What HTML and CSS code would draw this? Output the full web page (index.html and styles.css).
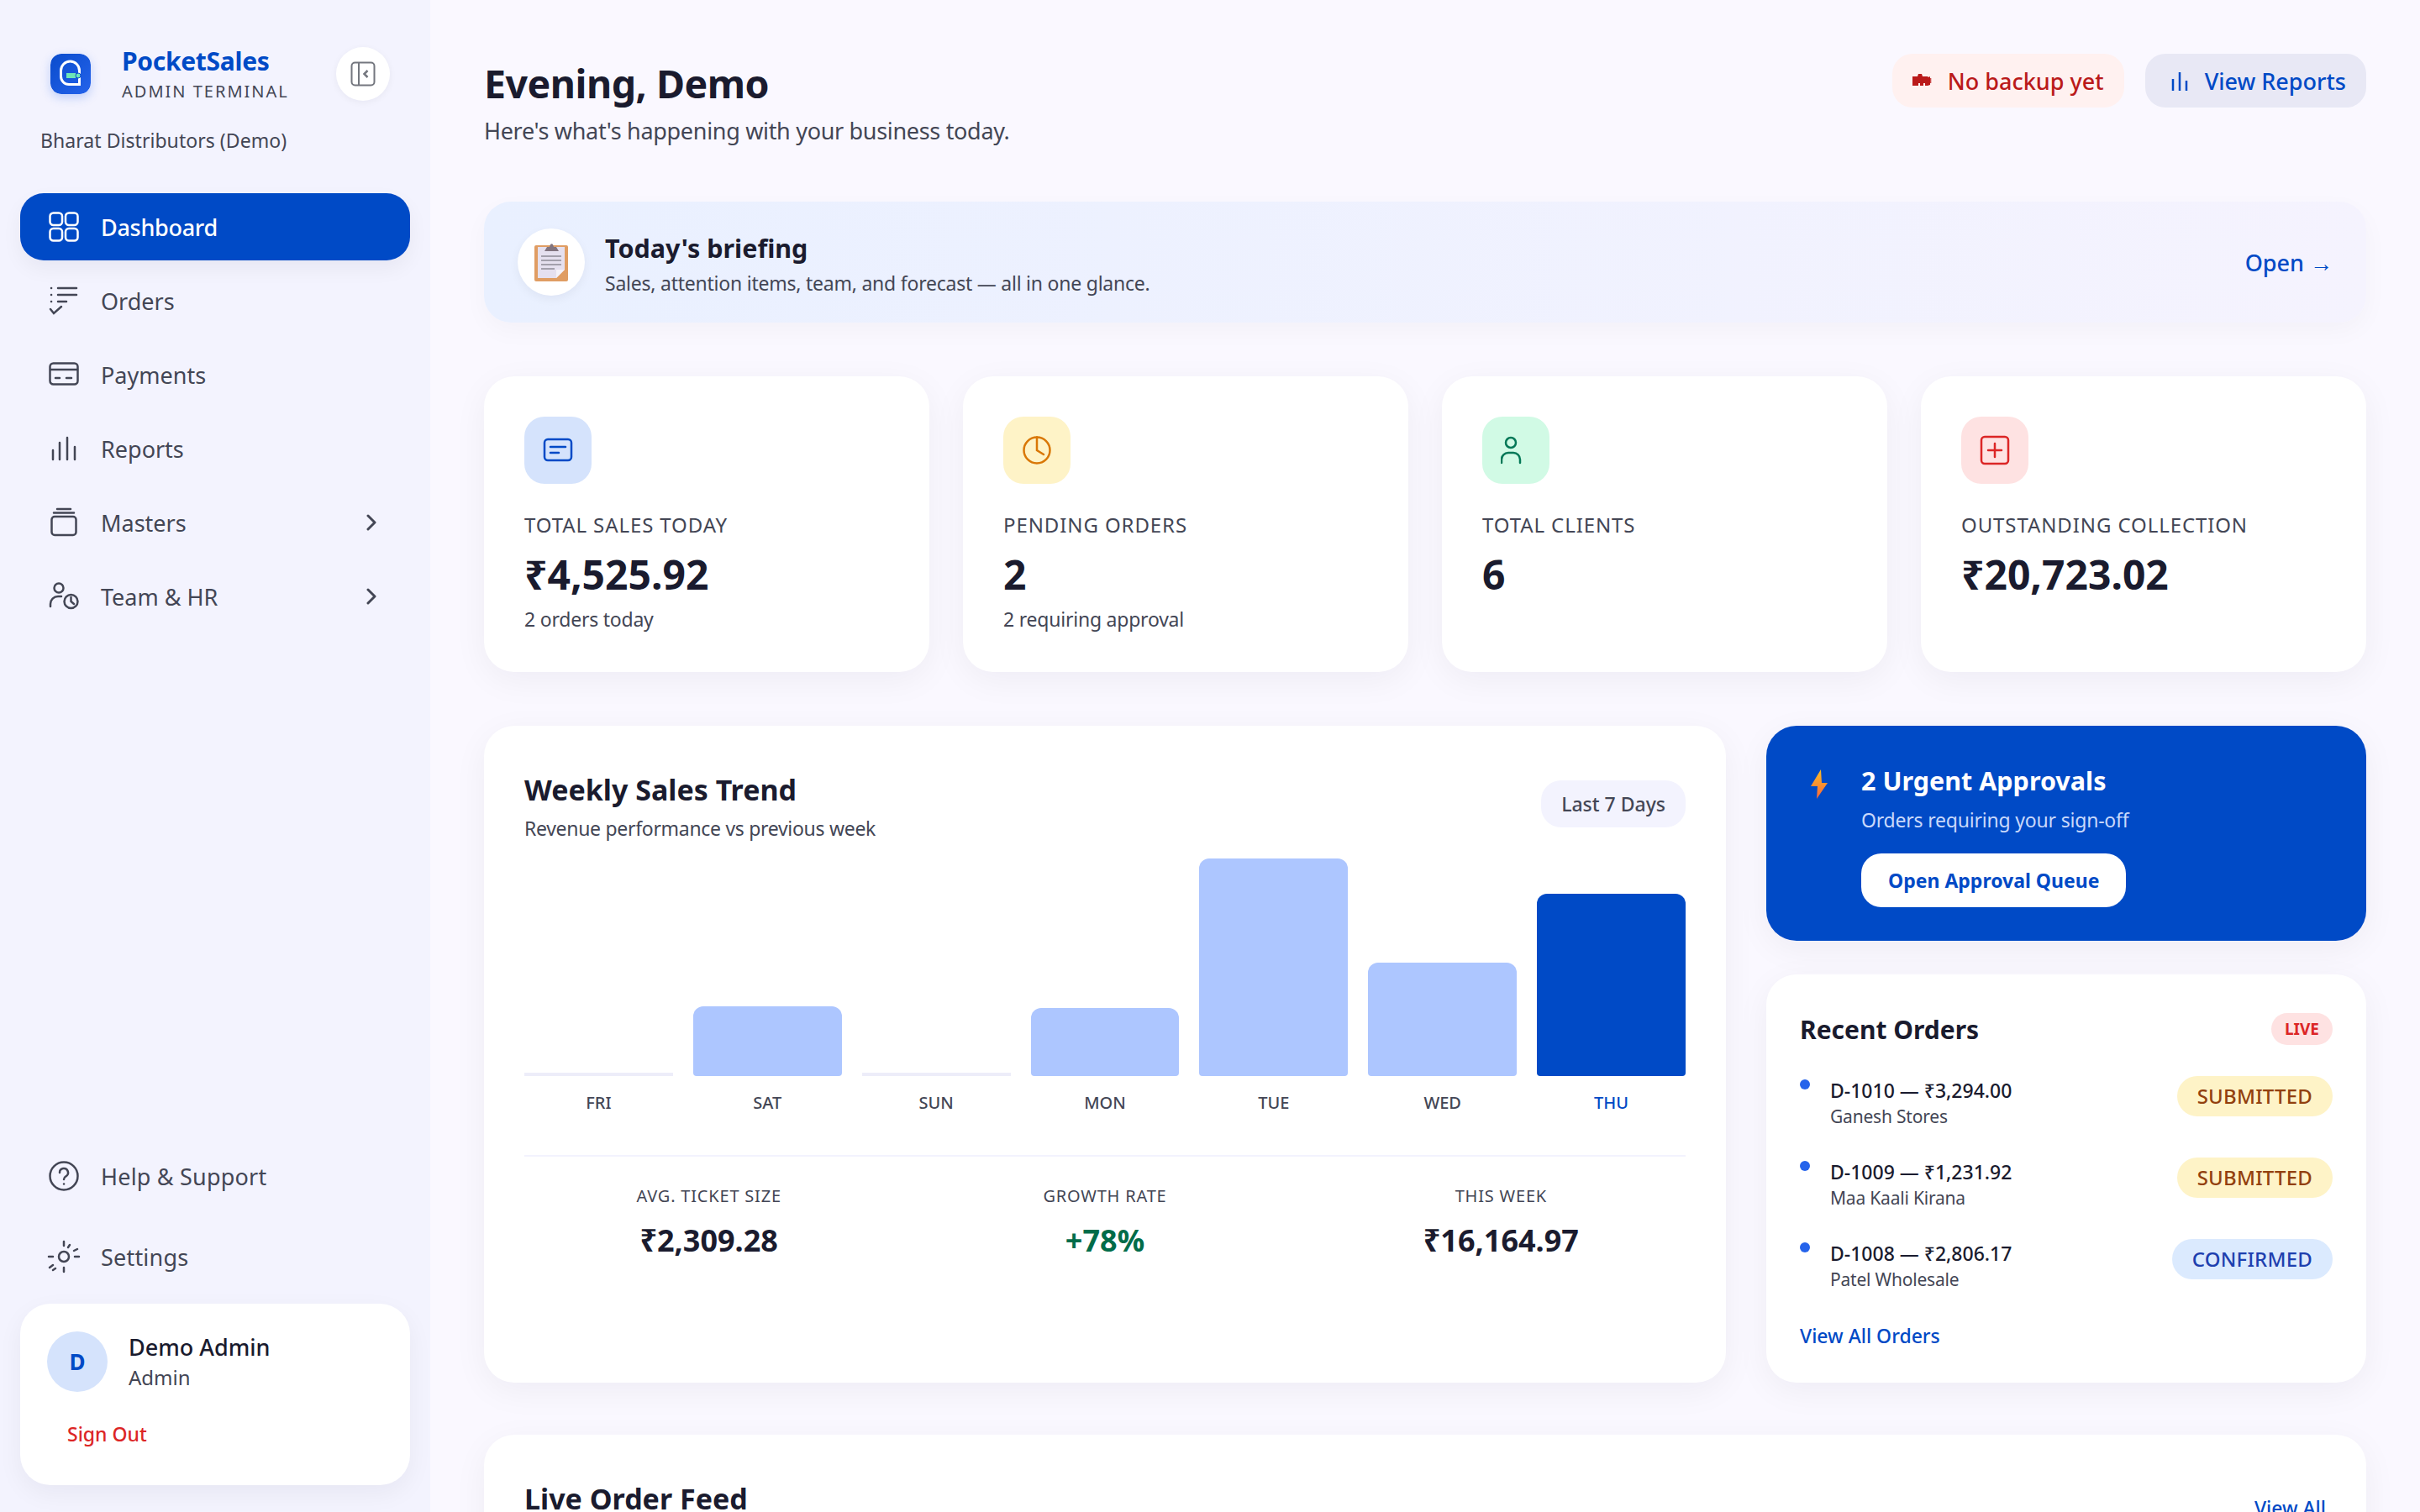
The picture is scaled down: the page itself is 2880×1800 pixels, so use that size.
FILE: index.html

```html
<!DOCTYPE html>
<html lang="en">
<head>
  <meta charset="UTF-8" />
  <title>PocketSales</title>
  <link rel="stylesheet" href="styles.css">
</head>
<body>
  <aside class="sidebar">
    <div class="brand">
      <svg class="brand-logo" viewBox="0 0 48 48">
        <defs>
          <linearGradient id="logoFill" x1="0" y1="0" x2="1" y2="1">
            <stop offset="0" stop-color="#0a4ccc" />
            <stop offset="1" stop-color="#2563eb" />
          </linearGradient>
        </defs>
        <rect width="48" height="48" rx="13" fill="url(#logoFill)" />
        <path d="M34 36.500H22a9.500 9.500 0 0 1-9.500-9.500V20a11 11 0 0 1 22 0v16.500z" fill="none" stroke="#fff" stroke-width="3" />
        <rect x="19" y="23" width="11" height="6" fill="#6ee7b7" />
        <circle cx="33" cy="26" r="3" fill="#6ee7b7" stroke="#0a4ccc" stroke-width="1" />
      </svg>
      <div class="brand-text">
        <div class="brand-name">PocketSales</div>
        <div class="brand-role">ADMIN TERMINAL</div>
      </div>
      <button class="collapse-btn">
        <svg class="icon-sm" viewBox="0 0 30 30" fill="none" stroke="#74777f" stroke-width="2">
          <rect x="1.500" y="1.500" width="27" height="27" rx="4" />
          <path d="M10 1.500v27" />
          <path d="M20.500 11l-4 4 4 4" stroke-width="2.500" />
        </svg>
      </button>
    </div>
    <div class="org-name">Bharat Distributors (Demo)</div>

    <nav class="nav">
      <a class="nav-item active">
        <svg class="nav-icon" viewBox="0 0 36 36" fill="none" stroke="currentColor" stroke-width="2.500">
          <rect x="1.500" y="1.500" width="14.500" height="14.500" rx="4" />
          <rect x="20" y="1.500" width="14.500" height="14.500" rx="4" />
          <rect x="1.500" y="20" width="14.500" height="14.500" rx="4" />
          <rect x="20" y="20" width="14.500" height="14.500" rx="4" />
        </svg>
        <span>Dashboard</span>
      </a>
      <a class="nav-item">
        <svg class="nav-icon" viewBox="0 0 36 36" fill="none" stroke="currentColor" stroke-width="2.500" stroke-linecap="round">
          <path d="M3 3h.1M3 11h.1M3 19h.1M11 3h22M11 11h22M11 19h10M2 28l4 5 9-8" />
        </svg>
        <span>Orders</span>
      </a>
      <a class="nav-item">
        <svg class="nav-icon" viewBox="0 0 36 36" fill="none" stroke="currentColor" stroke-width="2.500" stroke-linecap="round">
          <rect x="1.500" y="4.500" width="33" height="25" rx="4" />
          <path d="M2 12h32M8 22h5M21 22h6" />
        </svg>
        <span>Payments</span>
      </a>
      <a class="nav-item">
        <svg class="nav-icon" viewBox="0 0 36 36" fill="none" stroke="currentColor" stroke-width="2.500" stroke-linecap="round">
          <path d="M5 20v11M13 11v20M22 5v26M31 16v15" />
        </svg>
        <span>Reports</span>
      </a>
      <a class="nav-item">
        <svg class="nav-icon" viewBox="0 0 36 36" fill="none" stroke="currentColor" stroke-width="2.500" stroke-linecap="round">
          <rect x="3.500" y="11" width="29" height="22" rx="3.500" />
          <path d="M6 6.500h24M10 2h16" />
        </svg>
        <span>Masters</span>
        <svg class="chevron" viewBox="0 0 12 20" fill="none" stroke="currentColor" stroke-width="3" stroke-linecap="round" stroke-linejoin="round"><path d="M2 2l8 8-8 8" /></svg>
      </a>
      <a class="nav-item">
        <svg class="nav-icon" viewBox="0 0 36 36" fill="none" stroke="currentColor" stroke-width="2.500" stroke-linecap="round">
          <circle cx="12" cy="8" r="5.500" />
          <path d="M2 30v-3a9 9 0 0 1 9-9h4" />
          <circle cx="26.500" cy="24" r="8" />
          <path d="M26.500 19v5l3.500 3" />
        </svg>
        <span>Team &amp; HR</span>
        <svg class="chevron" viewBox="0 0 12 20" fill="none" stroke="currentColor" stroke-width="3" stroke-linecap="round" stroke-linejoin="round"><path d="M2 2l8 8-8 8" /></svg>
      </a>
    </nav>

    <div class="sidebar-foot">
      <a class="nav-item foot-item">
        <svg class="nav-icon" viewBox="0 0 36 36" fill="none" stroke="currentColor" stroke-width="2.500" stroke-linecap="round">
          <circle cx="18" cy="18" r="16.500" />
          <path d="M13 14a5 5 0 1 1 7.500 4.300c-1.600 1-2.500 2-2.500 3.700M18 27.500h.1" />
        </svg>
        <span>Help &amp; Support</span>
      </a>
      <a class="nav-item foot-item">
        <svg class="nav-icon gear" viewBox="0 0 40 40" fill="none" stroke="currentColor" stroke-width="2.500" stroke-linecap="round">
          <circle cx="20" cy="20" r="6" />
          <path d="M20 2v5M20 33v5M2 20h5M33 20h5M27 6l-2 3M36 11l-4 2M3 33l4-3M7 36l3-2" />
        </svg>
        <span>Settings</span>
      </a>
      <div class="user-card">
        <div class="user-row">
          <div class="avatar">D</div>
          <div class="user-text">
            <div class="user-name">Demo Admin</div>
            <div class="user-role">Admin</div>
          </div>
        </div>
        <a class="sign-out">Sign Out</a>
      </div>
    </div>
  </aside>

  <main class="main">
    <header class="page-head">
      <div>
        <h1>Evening, Demo</h1>
        <p>Here's what's happening with your business today.</p>
      </div>
      <div class="head-actions">
        <div class="chip chip-red">
          <svg class="chip-icon" viewBox="0 0 24 18" fill="#ba1a1a">
            <path d="M0 4h6l1-3h4l1 3h6l1 1 2-1v2l2 1-2 1 2 1-2 1 2 1-2 1v2l-3 1h-3v-3h-2v3H9v-3H7v3H0z" />
          </svg>
          <span>No backup yet</span>
        </div>
        <div class="chip chip-blue">
          <svg class="chip-icon" viewBox="0 0 24 24" fill="none" stroke="#004ac6" stroke-width="2.500">
            <path d="M4 10v14M12 2v22M20 12v12" />
          </svg>
          <span>View Reports</span>
        </div>
      </div>
    </header>

    <section class="briefing">
      <div class="brief-icon">
        <svg viewBox="0 0 40 46" width="40" height="46">
          <rect x="0" y="3" width="40" height="43" rx="2" fill="#e09d63" />
          <rect x="4" y="5" width="32" height="37" fill="#e5e0ef" />
          <path d="M26 42l10-10v10z" fill="#e09d63" />
          <path d="M26 42v-10h10z" fill="#f5f2f8" />
          <path d="M12 10l3-5h3l1-3a2 2 0 0 1 3 0l1 3h3l3 5z" fill="#81747f" />
          <path d="M8 16h24M8 21h24M8 26h24M8 31h16" stroke="#8d8a97" stroke-width="1.500" />
        </svg>
      </div>
      <div class="brief-text">
        <div class="brief-title">Today's briefing</div>
        <div class="brief-sub">Sales, attention items, team, and forecast — all in one glance.</div>
      </div>
      <a class="brief-link">Open →</a>
    </section>

    <section class="stats">
      <div class="stat-card">
        <div class="stat-icon tint-blue">
          <svg viewBox="0 0 36 36" fill="none" stroke="#004ac6" stroke-width="2.500" stroke-linecap="round">
            <rect x="2" y="5" width="32" height="25" rx="4" />
            <path d="M9 14h18M9 21h10" />
          </svg>
        </div>
        <div class="stat-label">Total Sales Today</div>
        <div class="stat-value">₹4,525.92</div>
        <div class="stat-sub">2 orders today</div>
      </div>
      <div class="stat-card">
        <div class="stat-icon tint-yellow">
          <svg viewBox="0 0 36 36" fill="none" stroke="#d97706" stroke-width="2.500" stroke-linecap="round">
            <circle cx="18" cy="18" r="15.500" />
            <path d="M18 2.500V18l8 5" />
          </svg>
        </div>
        <div class="stat-label">Pending Orders</div>
        <div class="stat-value">2</div>
        <div class="stat-sub">2 requiring approval</div>
      </div>
      <div class="stat-card">
        <div class="stat-icon tint-green">
          <svg viewBox="0 0 36 36" fill="none" stroke="#047857" stroke-width="2.500" stroke-linecap="round">
            <circle cx="12" cy="9" r="6" />
            <path d="M1 33v-4a8 8 0 0 1 8-8h6a8 8 0 0 1 8 8v4" />
          </svg>
        </div>
        <div class="stat-label">Total Clients</div>
        <div class="stat-value">6</div>
      </div>
      <div class="stat-card">
        <div class="stat-icon tint-red">
          <svg viewBox="0 0 36 36" fill="none" stroke="#dc2626" stroke-width="2.500" stroke-linecap="round">
            <rect x="2" y="2" width="32" height="32" rx="4" />
            <path d="M18 10v16M10 18h16" />
          </svg>
        </div>
        <div class="stat-label">Outstanding Collection</div>
        <div class="stat-value">₹20,723.02</div>
      </div>
    </section>

    <section class="mid">
      <div class="chart-card">
        <div class="chart-head">
          <div>
            <h2>Weekly Sales Trend</h2>
            <p>Revenue performance vs previous week</p>
          </div>
          <div class="range-pill">Last 7 Days</div>
        </div>
        <div class="bars">
          <div class="bar-col"><div class="bar bar-empty"></div><span>FRI</span></div>
          <div class="bar-col"><div class="bar" style="height: 83px"></div><span>SAT</span></div>
          <div class="bar-col"><div class="bar bar-empty"></div><span>SUN</span></div>
          <div class="bar-col"><div class="bar" style="height: 81px"></div><span>MON</span></div>
          <div class="bar-col"><div class="bar" style="height: 259px"></div><span>TUE</span></div>
          <div class="bar-col"><div class="bar" style="height: 135px"></div><span>WED</span></div>
          <div class="bar-col today"><div class="bar" style="height: 217px"></div><span>THU</span></div>
        </div>
        <div class="chart-stats">
          <div class="chart-stat">
            <div class="chart-stat-label">AVG. TICKET SIZE</div>
            <div class="chart-stat-value">₹2,309.28</div>
          </div>
          <div class="chart-stat">
            <div class="chart-stat-label">GROWTH RATE</div>
            <div class="chart-stat-value up">+78%</div>
          </div>
          <div class="chart-stat">
            <div class="chart-stat-label">THIS WEEK</div>
            <div class="chart-stat-value">₹16,164.97</div>
          </div>
        </div>
      </div>

      <div class="side-col">
        <div class="urgent-card">
          <svg class="bolt" viewBox="0 0 26 36">
            <defs>
              <linearGradient id="boltFill" x1="0" y1="0" x2="0" y2="1">
                <stop offset="0" stop-color="#fbbf24" />
                <stop offset="1" stop-color="#f9653c" />
              </linearGradient>
            </defs>
            <path d="M17 0L5 20h8l-1 15 13-19h-7z" fill="url(#boltFill)" />
          </svg>
          <div>
            <div class="urgent-title">2 Urgent Approvals</div>
            <div class="urgent-sub">Orders requiring your sign-off</div>
            <a class="urgent-btn">Open Approval Queue</a>
          </div>
        </div>

        <div class="orders-card">
          <div class="orders-head">
            <h3>Recent Orders</h3>
            <span class="live-pill">LIVE</span>
          </div>
          <div class="order-row">
            <i class="order-dot"></i>
            <div class="order-info">
              <div class="order-id">D-1010 — ₹3,294.00</div>
              <div class="order-client">Ganesh Stores</div>
            </div>
            <span class="status status-submitted">SUBMITTED</span>
          </div>
          <div class="order-row">
            <i class="order-dot"></i>
            <div class="order-info">
              <div class="order-id">D-1009 — ₹1,231.92</div>
              <div class="order-client">Maa Kaali Kirana</div>
            </div>
            <span class="status status-submitted">SUBMITTED</span>
          </div>
          <div class="order-row">
            <i class="order-dot"></i>
            <div class="order-info">
              <div class="order-id">D-1008 — ₹2,806.17</div>
              <div class="order-client">Patel Wholesale</div>
            </div>
            <span class="status status-confirmed">CONFIRMED</span>
          </div>
          <a class="view-all-orders">View All Orders</a>
        </div>
      </div>
    </section>

    <section class="feed-card">
      <h2>Live Order Feed</h2>
      <a class="feed-link">View All</a>
    </section>
  </main>
</body>
</html>
```

FILE: styles.css

```css
* {
  box-sizing: border-box;
}
html, body {
  margin: 0;
  height: 1800px;
  overflow: hidden;
}
body {
  display: flex;
  background-color: #faf8ff;
  color: #1a1b2e;
  font-family: "Noto Sans", "Open Sans", sans-serif;
}
h1, h2, h3, p {
  margin: 0;
}

/* sidebar */
.sidebar {
  width: 512px;
  flex: none;
  height: 1800px;
  padding: 56px 24px 32px;
  display: flex;
  flex-direction: column;
  background-color: #f3f3fe;
}
.brand {
  display: flex;
  align-items: center;
  height: 64px;
  padding-left: 36px;
}
.brand-logo {
  width: 48px;
  height: 48px;
  margin-right: 37px;
  box-shadow: 0 4px 12px rgba(37, 99, 235, 0.25);
  border-radius: 13px;
}
.brand-text {
  flex: 1;
}
.brand-name {
  font-size: 30px;
  line-height: 36px;
  font-weight: 700;
  color: #004ac6;
  letter-spacing: -0.3px;
}
.brand-role {
  margin-top: 5px;
  font-size: 20px;
  line-height: 26px;
  letter-spacing: 2px;
  color: #434655;
}
.collapse-btn {
  width: 64px;
  height: 64px;
  margin-right: 24px;
  border: 0;
  border-radius: 50%;
  padding: 0;
  background: #fff;
  display: flex;
  align-items: center;
  justify-content: center;
  box-shadow: 0 2px 8px rgba(26, 27, 46, 0.05);
}
.icon-sm {
  width: 30px;
  height: 30px;
}
.org-name {
  margin: 31px 0 0 24px;
  font-size: 23px;
  line-height: 32px;
  letter-spacing: 0.05px;
  color: #434655;
}
.nav {
  margin-top: 47px;
  display: flex;
  flex-direction: column;
  gap: 8px;
}
.nav-item {
  height: 80px;
  padding: 0 34px;
  display: flex;
  align-items: center;
  gap: 26px;
  font-size: 27px;
  color: #434655;
  border-radius: 28px;
}
.nav-item.active {
  background-color: #004ac6;
  color: #fff;
  font-weight: 500;
  letter-spacing: -0.3px;
  box-shadow: 0 10px 24px rgba(26, 27, 46, 0.05);
}
.nav-icon {
  width: 36px;
  height: 36px;
  flex: none;
}
.nav-icon.gear {
  width: 40px;
  height: 40px;
  margin: 0 -2px;
}
.chevron {
  width: 12px;
  height: 20px;
  margin-left: auto;
  margin-right: 6px;
}
.sidebar-foot {
  margin-top: auto;
  display: flex;
  flex-direction: column;
}
.foot-item {
  height: 96px;
  letter-spacing: 0.2px;
}
.foot-item:nth-child(2) {
  margin-bottom: 8px;
}
.user-card {
  height: 216px;
  padding: 32px;
  background: #fff;
  border-radius: 36px;
  box-shadow: 0 10px 30px rgba(26, 27, 46, 0.05);
}
.user-row {
  display: flex;
  align-items: center;
  gap: 25px;
}
.avatar {
  width: 72px;
  height: 72px;
  border-radius: 50%;
  background-color: #d5e3fc;
  color: #004ac6;
  font-size: 26px;
  font-weight: 700;
  display: flex;
  align-items: center;
  justify-content: center;
}
.user-text {
  padding-top: 2px;
}
.user-name {
  font-size: 27px;
  line-height: 36px;
  font-weight: 500;
}
.user-role {
  font-size: 24px;
  line-height: 36px;
  color: #434655;
}
.sign-out {
  display: block;
  margin: 33px 0 0 24px;
  font-size: 23px;
  line-height: 32px;
  font-weight: 500;
  color: #dc2626;
}

/* main column */
.main {
  flex: 1;
  min-width: 0;
  height: 1800px;
  padding: 64px 64px 0;
  overflow: hidden;
}
.page-head {
  display: flex;
  justify-content: space-between;
  align-items: flex-start;
  height: 112px;
}
h1 {
  margin-top: 5px;
  font-size: 46.500px;
  line-height: 60px;
  font-weight: 700;
  letter-spacing: -0.5px;
}
.page-head p {
  margin-top: 7px;
  font-size: 27px;
  line-height: 40px;
  letter-spacing: -0.32px;
  color: #434655;
}
.head-actions {
  display: flex;
  gap: 25px;
}
.chip {
  height: 64px;
  padding: 0 24px;
  display: flex;
  align-items: center;
  gap: 18px;
  border-radius: 24px;
  font-size: 27px;
  font-weight: 500;
}
.chip-icon {
  width: 24px;
  height: 24px;
}
.chip-red {
  background-color: #fff1f0;
  color: #ba1a1a;
}
.chip-blue {
  padding-left: 29px;
  background-color: #e8e8f5;
  color: #004ac6;
}

.briefing {
  margin-top: 64px;
  height: 144px;
  padding: 0 40px;
  display: flex;
  align-items: center;
  gap: 24px;
  border-radius: 32px;
  background: linear-gradient(90deg, #e9f0ff, #f5f3fe);
  box-shadow: 0 10px 30px rgba(26, 27, 46, 0.03);
}
.brief-icon {
  width: 80px;
  height: 80px;
  flex: none;
  border-radius: 50%;
  background: #fff;
  display: flex;
  align-items: center;
  justify-content: center;
  box-shadow: 0 4px 12px rgba(26, 27, 46, 0.05);
}
.brief-text {
  flex: 1;
  padding-top: 3px;
}
.brief-title {
  font-size: 30.500px;
  line-height: 42px;
  font-weight: 700;
}
.brief-sub {
  margin-top: 5px;
  font-size: 23px;
  line-height: 32px;
  letter-spacing: -0.23px;
  color: #434655;
}
.brief-link {
  font-size: 27px;
  font-weight: 500;
  color: #004ac6;
}

.stats {
  margin-top: 64px;
  display: grid;
  grid-template-columns: repeat(4, 1fr);
  gap: 40px;
}
.stat-card {
  height: 352px;
  padding: 48px;
  background: #fff;
  border-radius: 36px;
  box-shadow: 0 10px 40px rgba(26, 27, 46, 0.05);
}
.stat-icon {
  width: 80px;
  height: 80px;
  border-radius: 24px;
  display: flex;
  align-items: center;
  justify-content: center;
}
.stat-icon svg {
  width: 36px;
  height: 36px;
}
.tint-blue { background-color: #d5e3fc; }
.tint-yellow { background-color: #fef3c7; }
.tint-green { background-color: #d1fae5; }
.tint-red { background-color: #fee2e2; }
.stat-label {
  margin-top: 32px;
  font-size: 24px;
  line-height: 34px;
  letter-spacing: 0.9px;
  text-transform: uppercase;
  color: #434655;
}
.stat-value {
  margin-top: 10px;
  font-size: 48px;
  line-height: 64px;
  font-weight: 700;
}
.stat-sub {
  margin-top: 5px;
  font-size: 23px;
  line-height: 32px;
  letter-spacing: -0.22px;
  color: #434655;
}

.mid {
  margin-top: 64px;
  height: 780px;
  display: grid;
  grid-template-columns: 1478px 1fr;
  gap: 48px;
}
.chart-card {
  padding: 48px;
  background: #fff;
  border-radius: 36px;
  box-shadow: 0 10px 40px rgba(26, 27, 46, 0.05);
}
.chart-head {
  display: flex;
  justify-content: space-between;
  align-items: flex-start;
  height: 90px;
}
h2 {
  margin-top: 3px;
  font-size: 34px;
  line-height: 50px;
  font-weight: 700;
}
.chart-head p {
  margin-top: 5px;
  font-size: 23px;
  line-height: 32px;
  letter-spacing: -0.3px;
  color: #434655;
}
.range-pill {
  margin-top: 17px;
  height: 56px;
  padding: 0 24px;
  border-radius: 24px;
  background-color: #f3f3fe;
  font-size: 23px;
  line-height: 56px;
  font-weight: 500;
  color: #434655;
}
.bars {
  margin-top: 20px;
  height: 302px;
  display: grid;
  grid-template-columns: repeat(7, 1fr);
  gap: 24px;
}
.bar-col {
  display: flex;
  flex-direction: column;
  justify-content: flex-end;
  align-items: stretch;
  text-align: center;
  font-size: 20px;
  line-height: 26px;
  font-weight: 500;
  color: #434655;
}
.bar-col span {
  margin-top: 19px;
}
.bar {
  background-color: #adc6ff;
  border-radius: 12px 12px 4px 4px;
}
.bar-empty {
  height: 4px;
  background-color: #ededf9;
  border-radius: 0;
}
.today .bar {
  background-color: #004ac6;
}
.today span {
  color: #004ac6;
}
.chart-stats {
  margin-top: 51px;
  padding-top: 32px;
  border-top: 2px solid #f3f3fe;
  display: grid;
  grid-template-columns: repeat(3, 1fr);
  gap: 32px;
  text-align: center;
}
.chart-stat-label {
  font-size: 20px;
  line-height: 30px;
  letter-spacing: 0.8px;
  color: #434655;
}
.chart-stat-value {
  margin-top: 14px;
  font-size: 36px;
  line-height: 48px;
  font-weight: 700;
}
.chart-stat-value.up {
  color: #006c49;
}

.side-col {
  display: flex;
  flex-direction: column;
  gap: 40px;
}
.urgent-card {
  height: 256px;
  padding: 44px 48px;
  display: flex;
  gap: 39px;
  background-color: #004ac6;
  color: #fff;
  border-radius: 36px;
  box-shadow: 0 10px 40px rgba(26, 27, 46, 0.05);
}
.bolt {
  width: 26px;
  height: 36px;
  margin-top: 8px;
  flex: none;
}
.urgent-title {
  font-size: 30.500px;
  line-height: 42px;
  font-weight: 700;
}
.urgent-sub {
  margin-top: 10px;
  font-size: 23px;
  line-height: 32px;
  letter-spacing: -0.2px;
  color: #c9d9fb;
}
.urgent-btn {
  display: block;
  width: fit-content;
  margin-top: 24px;
  height: 64px;
  padding: 0 32px;
  border-radius: 24px;
  background: #fff;
  color: #004ac6;
  font-size: 23px;
  line-height: 64px;
  font-weight: 700;
}

.orders-card {
  flex: 1;
  padding: 40px;
  background: #fff;
  border-radius: 36px;
  box-shadow: 0 10px 40px rgba(26, 27, 46, 0.05);
}
.orders-head {
  display: flex;
  justify-content: space-between;
  align-items: center;
  height: 50px;
}
h3 {
  font-size: 30px;
  font-weight: 700;
}
.live-pill {
  height: 38px;
  padding: 0 16px;
  border-radius: 19px;
  background-color: #fee2e2;
  color: #dc2626;
  font-size: 19px;
  line-height: 38px;
  font-weight: 700;
}
.order-row {
  margin-top: 31px;
  height: 66px;
  display: flex;
  align-items: flex-start;
}
.order-dot {
  width: 12px;
  height: 12px;
  margin: 4px 24px 0 0;
  flex: none;
  border-radius: 50%;
  background-color: #2563eb;
}
.order-info {
  flex: 1;
}
.order-id {
  font-size: 23px;
  line-height: 34px;
  font-weight: 500;
}
.order-client {
  font-size: 21px;
  line-height: 28px;
  letter-spacing: -0.2px;
  color: #434655;
}
.status {
  height: 48px;
  padding: 0 24px;
  border-radius: 24px;
  font-size: 24px;
  line-height: 48px;
  font-weight: 500;
  letter-spacing: 0.2px;
}
.status-submitted {
  background-color: #fef3c7;
  color: #92400e;
}
.status-confirmed {
  background-color: #dbeafe;
  color: #1e40af;
}
.view-all-orders {
  display: block;
  margin-top: 33px;
  font-size: 23px;
  line-height: 32px;
  font-weight: 500;
  color: #004ac6;
}

.feed-card {
  margin-top: 64px;
  height: 300px;
  padding: 48px;
  display: flex;
  justify-content: space-between;
  align-items: flex-start;
  background: #fff;
  border-radius: 36px;
  box-shadow: 0 10px 40px rgba(26, 27, 46, 0.05);
}
.feed-link {
  margin-top: 23px;
  font-size: 23px;
  font-weight: 500;
  color: #004ac6;
}
```
